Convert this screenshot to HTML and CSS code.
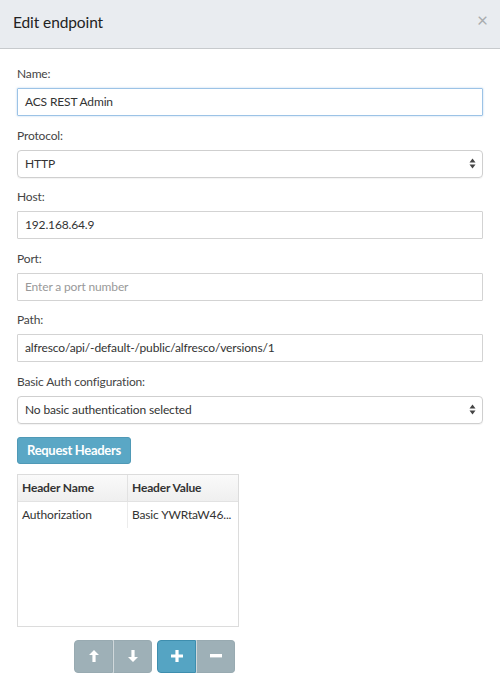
FILE: index.html
```html
<!DOCTYPE html>
<html>
<head>
<meta charset="utf-8">
<link rel="stylesheet" href="styles.css">
</head>
<body>
<div class="modal">
  <div class="modal-header">
    <h4 class="modal-title">Edit endpoint</h4>
    <span class="close">&times;</span>
  </div>
  <div class="modal-body">
    <div class="group">
      <label class="lbl">Name:</label>
      <div class="input focus">ACS REST Admin</div>
    </div>
    <div class="group">
      <label class="lbl">Protocol:</label>
      <div class="select">HTTP<span class="arrows"><svg width="7" height="11" viewBox="0 0 7 11"><path d="M3.5 0.5L6.5 4.5H0.5Z M3.5 10.5L6.5 6.5H0.5Z" fill="#444"/></svg></span></div>
    </div>
    <div class="group">
      <label class="lbl">Host:</label>
      <div class="input">192.168.64.9</div>
    </div>
    <div class="group">
      <label class="lbl">Port:</label>
      <div class="input placeholder">Enter a port number</div>
    </div>
    <div class="group">
      <label class="lbl">Path:</label>
      <div class="input">alfresco/api/-default-/public/alfresco/versions/1</div>
    </div>
    <div class="group">
      <label class="lbl">Basic Auth configuration:</label>
      <div class="select">No basic authentication selected<span class="arrows"><svg width="7" height="11" viewBox="0 0 7 11"><path d="M3.5 0.5L6.5 4.5H0.5Z M3.5 10.5L6.5 6.5H0.5Z" fill="#444"/></svg></span></div>
    </div>
    <button class="btn-headers">Request Headers</button>
    <div class="grid">
      <div class="grid-head">
        <div class="cell c1">Header Name</div>
        <div class="cell c2">Header Value</div>
      </div>
      <div class="grid-row">
        <div class="cell c1">Authorization</div>
        <div class="cell c2">Basic YWRtaW46...</div>
      </div>
    </div>
    <div class="actions">
      <div class="btn-group">
        <button class="ibtn gray"><svg width="10" height="12" viewBox="0 0 10 12"><path d="M5 0L10 5H6.6V12H3.4V5H0Z" fill="#fff"/></svg></button>
        <button class="ibtn gray"><svg width="10" height="12" viewBox="0 0 10 12"><path d="M5 12L10 7H6.6V0H3.4V7H0Z" fill="#fff"/></svg></button>
      </div>
      <div class="btn-group">
        <button class="ibtn blue"><svg width="12" height="12" viewBox="0 0 12 12"><path d="M4.4 0H7.6V4.4H12V7.6H7.6V12H4.4V7.6H0V4.4H4.4Z" fill="#fff"/></svg></button>
        <button class="ibtn gray"><svg width="12" height="4" viewBox="0 0 12 4"><rect x="0" y="0" width="12" height="3.4" fill="#fff"/></svg></button>
      </div>
    </div>
  </div>
</div>
</body>
</html>
```
FILE: styles.css
```css
html, body {
  margin: 0;
  padding: 0;
  background: #fff;
  font-family: Lato, "Open Sans", "Liberation Sans", sans-serif;
  color: #333;
}
.modal {
  width: 500px;
  height: 688px;
  overflow: hidden;
}
.modal-header {
  height: 48px;
  background: #e9ecf0;
  border-bottom: 1px solid #c7cacd;
  display: flex;
  align-items: center;
  justify-content: space-between;
  padding: 0 13px;
  box-sizing: content-box;
}
.modal-title {
  margin: 0;
  font-size: 15.5px;
  font-weight: 400;
  color: #222;
  position: relative;
  top: -2px;
  letter-spacing: -0.1px;
}
.close {
  font-size: 19px;
  color: #a9acaf;
  line-height: 1;
  position: relative;
  top: -5px;
  right: -1px;
}
.modal-body {
  padding: 16px 17px 0;
}
.group {
  margin-bottom: 10.6px;
}
.lbl {
  display: block;
  font-size: 12px;
  letter-spacing: -0.15px;
  line-height: 18px;
  margin-bottom: 5px;
  color: #444;
}
.input, .select {
  height: 28px;
  box-sizing: border-box;
  border: 1px solid #d3d3d3;
  border-radius: 1px;
  font-size: 12px;
  letter-spacing: -0.15px;
  line-height: 26px;
  padding: 0 7px;
  color: #333;
  white-space: nowrap;
}
.input.focus {
  border-color: #9cc3e6;
  box-shadow: 0 0 2px rgba(102, 160, 220, 0.5);
}
.input.placeholder {
  color: #999;
}
.select {
  border-radius: 4px;
  border-color: #cfcfcf;
  display: flex;
  justify-content: space-between;
  align-items: center;
  box-shadow: 0 1px 1px rgba(0,0,0,0.05);
}
.arrows {
  display: flex;
  margin-right: -1px;
}
.btn-headers {
  display: block;
  margin-top: 13px;
  height: 27px;
  width: 114px;
  background: #5aa7c5;
  border: 1px solid #4f99b6;
  border-radius: 3px;
  color: #fff;
  font-family: Lato, "Open Sans", sans-serif;
  font-weight: 700;
  font-size: 13px;
  padding: 0;
  letter-spacing: -0.3px;
}
.grid {
  margin-top: 10px;
  width: 222px;
  height: 153px;
  box-sizing: border-box;
  border: 1px solid #dcdcdc;
}
.grid-head, .grid-row {
  display: flex;
  height: 26px;
}
.grid-head {
  background: linear-gradient(#fafafa, #efefef);
  border-bottom: 1px solid #e2e2e2;
  font-weight: 700;
}
.cell {
  font-size: 12px;
  letter-spacing: -0.15px;
  line-height: 26px;
  padding: 0 4px;
  white-space: nowrap;
  overflow: hidden;
  box-sizing: border-box;
  color: #333;
}
.c1 {
  width: 110px;
  border-right: 1px solid #e2e2e2;
}
.grid-row .c1 {
  border-right-color: #ececec;
}
.c2 {
  width: 110px;
}
.actions {
  display: flex;
  gap: 5px;
  margin-top: 13px;
  padding-left: 57px;
}
.btn-group {
  display: flex;
}
.ibtn {
  width: 39px;
  height: 33px;
  padding: 0;
  border: 1px solid transparent;
  display: flex;
  align-items: center;
  justify-content: center;
}
.btn-group .ibtn:first-child {
  border-radius: 4px 0 0 4px;
}
.btn-group .ibtn:last-child {
  border-radius: 0 4px 4px 0;
  border-left: 1px solid #d0d8db;
}
.gray {
  background: #9eb0b7;
  border-color: #98aab1;
}
.blue {
  background: #55a4c3;
  border-color: #3e8eae;
}
```
